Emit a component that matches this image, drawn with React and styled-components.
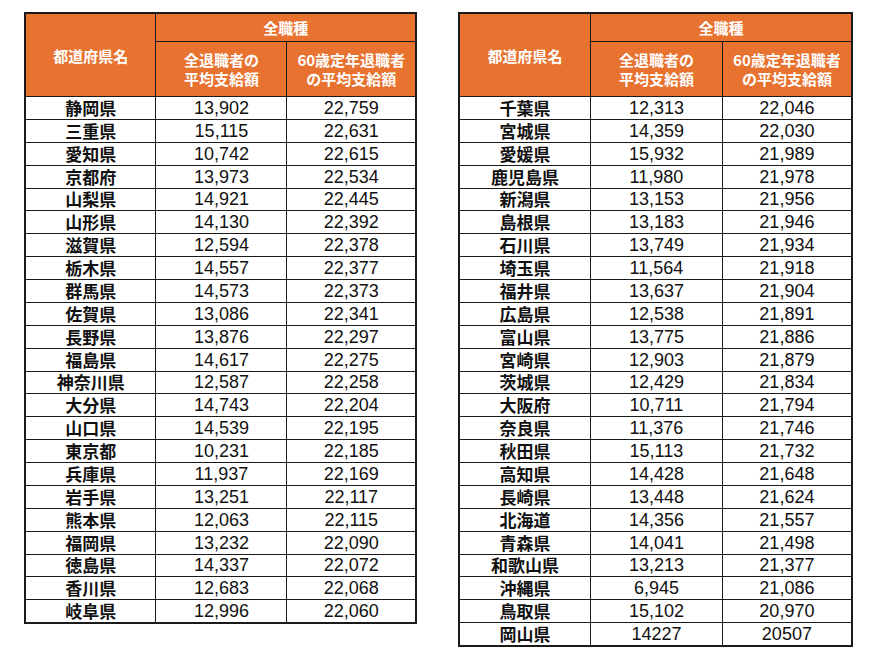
import React from 'react';
import styled, { createGlobalStyle } from 'styled-components';

const GlobalStyle = createGlobalStyle`
  html, body {
    margin: 0;
    padding: 0;
    background: #ffffff;
  }
  body {
    font-family: "Liberation Sans", Arial, "Noto Sans CJK JP", sans-serif;
  }
`;

const Page = styled.div`
  display: flex;
  align-items: flex-start;
  gap: 41px;
  padding: 12px 0 0 24px;
  width: 870px;
  height: 665px;
  box-sizing: border-box;
`;

const Table = styled.table`
  border-collapse: collapse;
  width: ${p => p.$width}px;
  table-layout: fixed;
  border: 2px solid #1a1a1a;
`;

const HeadCell = styled.th`
  background: #e8722f;
  color: #ffffff;
  font-family: "Noto Sans CJK JP", sans-serif;
  font-weight: 700;
  font-size: 15px;
  line-height: 19px;
  text-align: center;
  vertical-align: middle;
  border: 1px solid #1a1a1a;
  padding: 0;
  height: ${p => p.$h}px;
`;

const NameCell = styled.td`
  font-family: "Noto Sans CJK JP", sans-serif;
  font-weight: 700;
  font-size: 17px;
  color: #111;
  text-align: center;
  border: 1px solid #1a1a1a;
  padding: 0;
  height: 21.88px;
  line-height: 20px;
`;

const NumCell = styled.td`
  font-family: "Liberation Sans", Arial, sans-serif;
  font-size: 18px;
  color: #111;
  text-align: center;
  border: 1px solid #1a1a1a;
  padding: 0;
  height: 21.88px;
  line-height: 20px;
`;

const leftRows = [
  ['静岡県', '13,902', '22,759'],
  ['三重県', '15,115', '22,631'],
  ['愛知県', '10,742', '22,615'],
  ['京都府', '13,973', '22,534'],
  ['山梨県', '14,921', '22,445'],
  ['山形県', '14,130', '22,392'],
  ['滋賀県', '12,594', '22,378'],
  ['栃木県', '14,557', '22,377'],
  ['群馬県', '14,573', '22,373'],
  ['佐賀県', '13,086', '22,341'],
  ['長野県', '13,876', '22,297'],
  ['福島県', '14,617', '22,275'],
  ['神奈川県', '12,587', '22,258'],
  ['大分県', '14,743', '22,204'],
  ['山口県', '14,539', '22,195'],
  ['東京都', '10,231', '22,185'],
  ['兵庫県', '11,937', '22,169'],
  ['岩手県', '13,251', '22,117'],
  ['熊本県', '12,063', '22,115'],
  ['福岡県', '13,232', '22,090'],
  ['徳島県', '14,337', '22,072'],
  ['香川県', '12,683', '22,068'],
  ['岐阜県', '12,996', '22,060'],
];

const rightRows = [
  ['千葉県', '12,313', '22,046'],
  ['宮城県', '14,359', '22,030'],
  ['愛媛県', '15,932', '21,989'],
  ['鹿児島県', '11,980', '21,978'],
  ['新潟県', '13,153', '21,956'],
  ['島根県', '13,183', '21,946'],
  ['石川県', '13,749', '21,934'],
  ['埼玉県', '11,564', '21,918'],
  ['福井県', '13,637', '21,904'],
  ['広島県', '12,538', '21,891'],
  ['富山県', '13,775', '21,886'],
  ['宮崎県', '12,903', '21,879'],
  ['茨城県', '12,429', '21,834'],
  ['大阪府', '10,711', '21,794'],
  ['奈良県', '11,376', '21,746'],
  ['秋田県', '15,113', '21,732'],
  ['高知県', '14,428', '21,648'],
  ['長崎県', '13,448', '21,624'],
  ['北海道', '14,356', '21,557'],
  ['青森県', '14,041', '21,498'],
  ['和歌山県', '13,213', '21,377'],
  ['沖縄県', '6,945', '21,086'],
  ['鳥取県', '15,102', '20,970'],
  ['岡山県', '14227', '20507'],
];

const RetireTable = ({ rows, width }) => (
  <Table $width={width}>
    <colgroup>
      <col style={{ width: '33.5%' }} />
      <col style={{ width: '33.5%' }} />
      <col />
    </colgroup>
    <thead>
      <tr>
        <HeadCell rowSpan={2} $h={27}>都道府県名</HeadCell>
        <HeadCell colSpan={2} $h={27}>全職種</HeadCell>
      </tr>
      <tr>
        <HeadCell $h={54}>全退職者の<br />平均支給額</HeadCell>
        <HeadCell $h={54}>60歳定年退職者<br />の平均支給額</HeadCell>
      </tr>
    </thead>
    <tbody>
      {rows.map(([name, all, sixty]) => (
        <tr key={name}>
          <NameCell>{name}</NameCell>
          <NumCell>{all}</NumCell>
          <NumCell>{sixty}</NumCell>
        </tr>
      ))}
    </tbody>
  </Table>
);

export default function App() {
  return (
    <>
      <GlobalStyle />
      <Page>
        <RetireTable rows={leftRows} width={393} />
        <RetireTable rows={rightRows} width={395} />
      </Page>
    </>
  );
}
